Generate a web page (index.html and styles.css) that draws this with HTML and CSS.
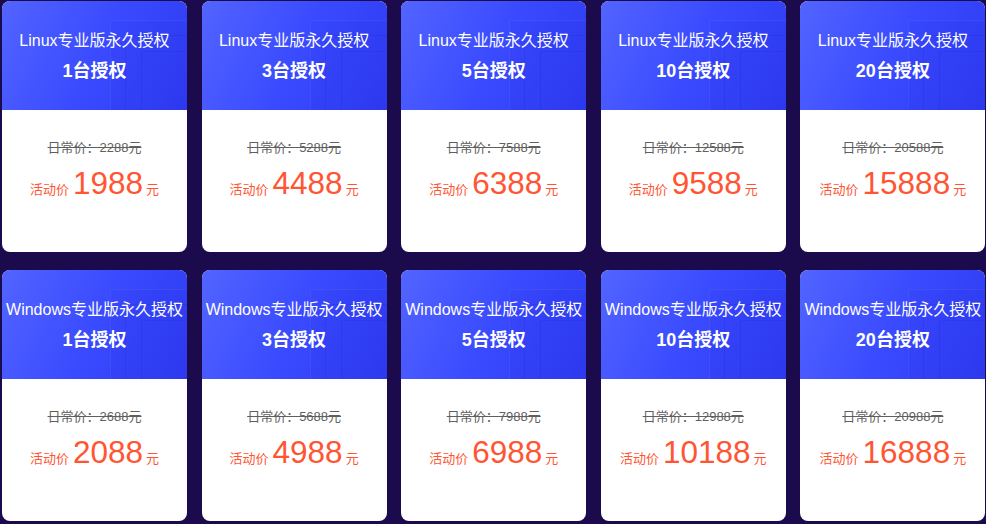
FILE: index.html
```html
<!DOCTYPE html>
<html lang="zh-CN">
<head>
<meta charset="utf-8">
<title>授权价格</title>
<link rel="stylesheet" href="styles.css">
</head>
<body>
<div class="grid">
  <div class="card"><div class="head"><div class="deco"></div><div class="title">Linux专业版永久授权</div><div class="sub">1台授权</div></div><div class="body"><div class="old">日常价：2288元</div><div class="now"><span class="lbl">活动价</span><span class="num">1988</span><span class="unit">元</span></div></div></div>
  <div class="card"><div class="head"><div class="deco"></div><div class="title">Linux专业版永久授权</div><div class="sub">3台授权</div></div><div class="body"><div class="old">日常价：5288元</div><div class="now"><span class="lbl">活动价</span><span class="num">4488</span><span class="unit">元</span></div></div></div>
  <div class="card"><div class="head"><div class="deco"></div><div class="title">Linux专业版永久授权</div><div class="sub">5台授权</div></div><div class="body"><div class="old">日常价：7588元</div><div class="now"><span class="lbl">活动价</span><span class="num">6388</span><span class="unit">元</span></div></div></div>
  <div class="card"><div class="head"><div class="deco"></div><div class="title">Linux专业版永久授权</div><div class="sub">10台授权</div></div><div class="body"><div class="old">日常价：12588元</div><div class="now"><span class="lbl">活动价</span><span class="num">9588</span><span class="unit">元</span></div></div></div>
  <div class="card"><div class="head"><div class="deco"></div><div class="title">Linux专业版永久授权</div><div class="sub">20台授权</div></div><div class="body"><div class="old">日常价：20588元</div><div class="now"><span class="lbl">活动价</span><span class="num">15888</span><span class="unit">元</span></div></div></div>
  <div class="card"><div class="head"><div class="deco"></div><div class="title">Windows专业版永久授权</div><div class="sub">1台授权</div></div><div class="body"><div class="old">日常价：2688元</div><div class="now"><span class="lbl">活动价</span><span class="num">2088</span><span class="unit">元</span></div></div></div>
  <div class="card"><div class="head"><div class="deco"></div><div class="title">Windows专业版永久授权</div><div class="sub">3台授权</div></div><div class="body"><div class="old">日常价：5688元</div><div class="now"><span class="lbl">活动价</span><span class="num">4988</span><span class="unit">元</span></div></div></div>
  <div class="card"><div class="head"><div class="deco"></div><div class="title">Windows专业版永久授权</div><div class="sub">5台授权</div></div><div class="body"><div class="old">日常价：7988元</div><div class="now"><span class="lbl">活动价</span><span class="num">6988</span><span class="unit">元</span></div></div></div>
  <div class="card"><div class="head"><div class="deco"></div><div class="title">Windows专业版永久授权</div><div class="sub">10台授权</div></div><div class="body"><div class="old">日常价：12988元</div><div class="now"><span class="lbl">活动价</span><span class="num">10188</span><span class="unit">元</span></div></div></div>
  <div class="card"><div class="head"><div class="deco"></div><div class="title">Windows专业版永久授权</div><div class="sub">20台授权</div></div><div class="body"><div class="old">日常价：20988元</div><div class="now"><span class="lbl">活动价</span><span class="num">16888</span><span class="unit">元</span></div></div></div>
</div>
</body>
</html>
```

FILE: styles.css
```css
html, body {
  margin: 0;
  padding: 0;
  background: #1b0a4c;
  overflow: hidden;
}
body {
  width: 986px;
  height: 524px;
  font-family: "Liberation Sans", "Noto Sans CJK SC", sans-serif;
}
.grid {
  display: grid;
  grid-template-columns: repeat(5, 185px);
  column-gap: 14.6px;
  row-gap: 18px;
  padding: 1px 0 0 2px;
}
.card {
  height: 251px;
  border-radius: 8px;
  overflow: hidden;
  background: #fff;
  display: flex;
  flex-direction: column;
}
.head {
  position: relative;
  height: 109px;
  box-sizing: border-box;
  padding-top: 30px;
  background: linear-gradient(115deg, #5264ff 0%, #3a4bff 50%, #2d3af0 100%);
  color: #fff;
  text-align: center;
  overflow: hidden;
}
.deco {
  position: absolute;
  left: 108px;
  top: 19px;
  width: 100px;
  height: 100px;
  border: 1px solid rgba(255,255,255,0.06);
  background: rgba(40,50,230,0.12);
}
.deco::before {
  content: "";
  position: absolute;
  left: 14px;
  top: 14px;
  width: 90px;
  height: 90px;
  border: 1px solid rgba(20,30,200,0.18);
}
.deco::after {
  content: "";
  position: absolute;
  left: 30px;
  top: 30px;
  width: 80px;
  height: 80px;
  border-left: 1px solid rgba(20,30,200,0.2);
  border-top: 1px solid rgba(20,30,200,0.12);
}
.title {
  position: relative;
  font-size: 16px;
  line-height: 20px;
  white-space: nowrap;
}
.sub {
  position: relative;
  margin-top: 8px;
  font-size: 18px;
  line-height: 24px;
  font-weight: bold;
}
.body {
  flex: 1;
  padding-top: 28px;
  text-align: center;
}
.old {
  font-size: 13px;
  line-height: 20px;
  color: #5f5f5f;
  text-decoration: line-through;
}
.now {
  margin-top: 7px;
  line-height: 36px;
  color: #ff5533;
  white-space: nowrap;
}
.lbl {
  font-size: 13px;
  margin-right: 4px;
}
.num {
  font-size: 31.5px;
}
.unit {
  font-size: 13px;
  margin-left: 3px;
}
```
